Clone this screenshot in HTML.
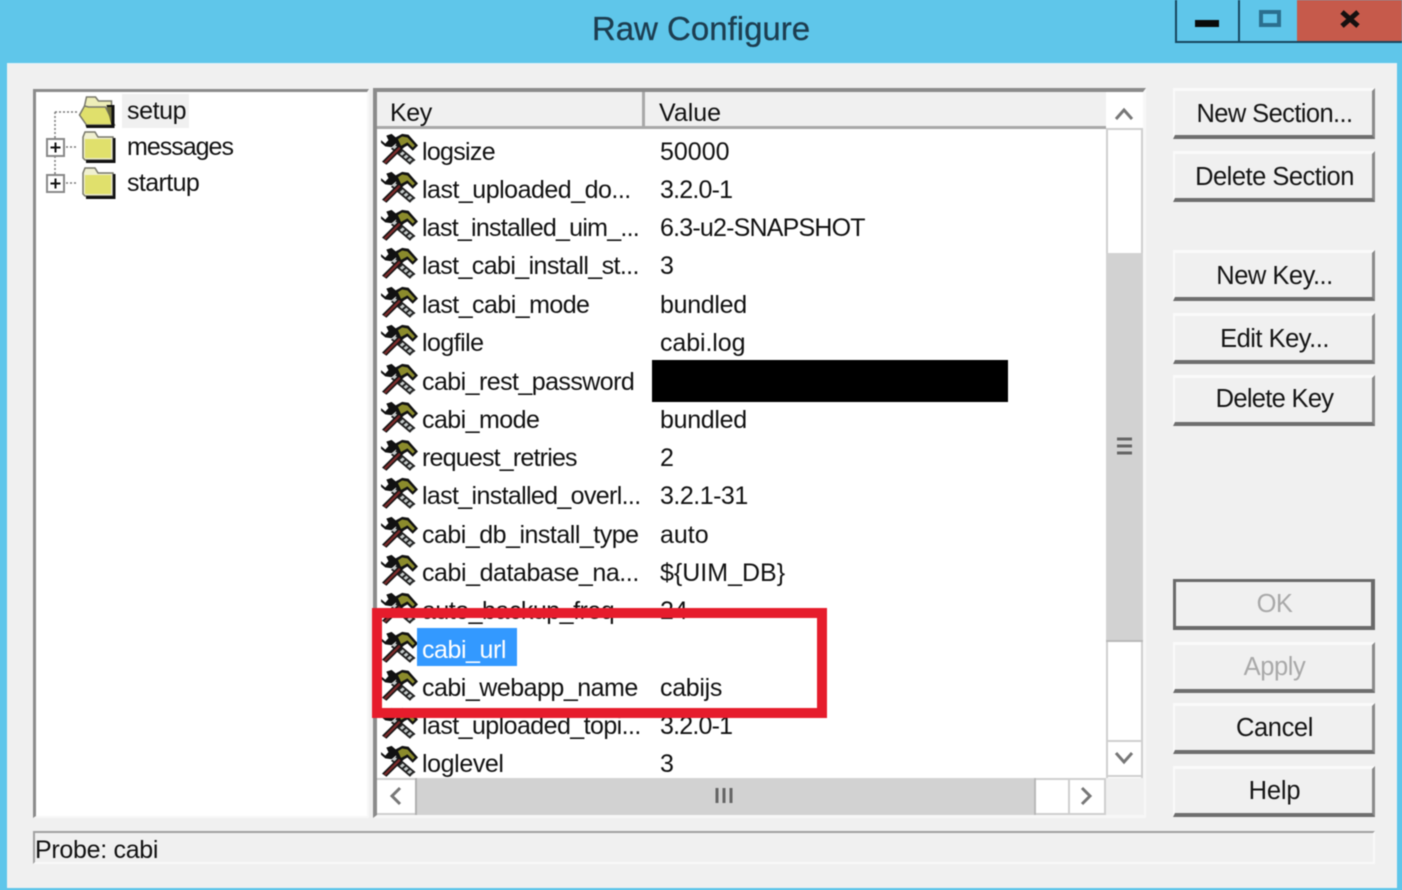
<!DOCTYPE html>
<html><head><meta charset="utf-8"><title>Raw Configure</title>
<style>
html,body{margin:0;padding:0;width:1402px;height:890px;overflow:hidden;background:#5fc6ea}
#w{position:absolute;left:0;top:0;width:1402px;height:890px;overflow:hidden;filter:blur(.55px);font-family:"Liberation Sans",sans-serif;color:#111}
#w div{position:absolute;box-sizing:border-box}
.t{font-size:25px;line-height:38px;height:38px;white-space:nowrap}
#rows .t{margin-top:1px}
.b{left:1173px;width:202px;height:51px;padding-left:2px;background:#f0f0f0;border-top:3px solid #fafafa;border-left:2px solid #fafafa;border-right:3px solid #8a8a8a;border-bottom:4px solid #6e6e6e;text-align:center;font-size:25.5px;line-height:44px;color:#151515;white-space:nowrap}
.d{color:#a9a9a9}
svg{position:absolute;overflow:visible}
#rows svg{left:3px;width:38px;height:32px;margin-top:1px}
</style></head><body>
<div id="w">
<svg width="0" height="0" style="left:0;top:0"><defs>
<symbol id="h" viewBox="0 0 36 36" preserveAspectRatio="none">
<path d="M13 15 L31 33" stroke="#222" stroke-width="7.500" fill="none"/>
<path d="M13 15 L31 33" stroke="#c4caca" stroke-width="3.800" stroke-dasharray="3 2" fill="none"/>
<path d="M1 8 L5 12 L8 8 L6 3 L11 1 L15 5 L15 12 L11 16 L5 15 L1 11Z" fill="#111"/>
<path d="M4 34 L21 14" stroke="#111" stroke-width="5.500" fill="none"/>
<path d="M4.500 33.500 L21 14" stroke="#7a2a2a" stroke-width="2.400" fill="none"/>
<path d="M13 6 L21 1 L27 2 L36 14 L31 20 L26 14 L20 18 L15 12Z" fill="#111"/>
<path d="M17 7 L21 4 L26 5 L33 14 L31 16.500 L26 10.500 L20 14.500Z" fill="#8b8b2c"/>
</symbol>
<symbol id="f" viewBox="0 0 36 36">
<path d="M3 8 L5 3 L15 3 L18 8 L33 8 L33 31 L5 31 L3 29Z" fill="#f0f0d0" stroke="#77776a" stroke-width="1.500"/>
<path d="M5 10 L31 10 L31 29 L5 29Z" fill="#e0e06c"/>
<path d="M33 9 L35.500 9 L35.500 34 L6 34 L6 31 L33 31Z" fill="#111"/>
</symbol>
<symbol id="o" viewBox="0 0 38 36">
<path d="M6 12 L8 3 L17 3 L20 7 L33 7 L33 13" fill="#eeeeb8" stroke="#77776a" stroke-width="1.500"/>
<path d="M10 13 L27 13 L36 31 L8 31 L1 21 L6 12Z" fill="#e0e06c" stroke="#77776a" stroke-width="1.500"/>
<path d="M28 11 L34 11 L36 11 L36 34 L8 34 L7 31 L33 31Z" fill="#111"/>
<path d="M28 13 L33 13 L33 29Z" fill="#6d6d3c"/>
</symbol>
</defs></svg>

<!-- title bar -->
<div style="left:0;top:9px;width:1402px;text-align:center;font-size:33px;line-height:40px;color:#1d3d50;-webkit-text-stroke:.3px #1d3d50">Raw Configure</div>
<div style="left:1175px;top:0;width:124px;height:43px;border:2px solid #17465f;border-top:none"></div>
<div style="left:1238px;top:0;width:2px;height:42px;background:#17465f"></div>
<div style="left:1297px;top:0;width:105px;height:43px;background:#c65a4b;border-bottom:2px solid #17465f"></div>
<div style="left:1195px;top:20px;width:24px;height:7px;background:#0a0a0a"></div>
<div style="left:1259px;top:10px;width:22px;height:17px;border:4px solid #2b6f8e"></div>
<svg style="left:1338px;top:9px" width="24" height="20"><path d="M4 3 L20 17 M20 3 L4 17" stroke="#151010" stroke-width="5"/></svg>

<!-- client -->
<div style="left:7px;top:63px;width:1390px;height:825px;background:#f0f0f0;border-top:1px solid #e4f2f8"></div>

<!-- tree panel -->
<div style="left:33px;top:89px;width:336px;height:729px;background:#fff;border-top:3px solid #8b8b8b;border-left:3px solid #8b8b8b;border-right:2px solid #f7f7f7;border-bottom:2px solid #f7f7f7"></div>
<div style="left:122px;top:94px;width:67px;height:34px;background:#f0f0f0"></div>
<svg style="left:40px;top:100px" width="50" height="100"><path d="M15 12 H38 M15 12 V38 M15 56 V74 M26 47 H38 M26 83 H38" stroke="#777" stroke-width="1.500" stroke-dasharray="2 2" fill="none"/></svg>
<svg style="left:78px;top:94px" width="39" height="36"><use href="#o"/></svg>
<svg style="left:80px;top:129px" width="36" height="36"><use href="#f"/></svg>
<svg style="left:80px;top:165px" width="36" height="36"><use href="#f"/></svg>
<svg style="left:46px;top:138px" width="20" height="20"><rect x="1" y="1" width="17" height="17" fill="#fff" stroke="#888" stroke-width="2"/><path d="M4.500 9.500 H14.500 M9.500 4.500 V14.500" stroke="#111" stroke-width="2"/></svg>
<svg style="left:46px;top:174px" width="20" height="20"><rect x="1" y="1" width="17" height="17" fill="#fff" stroke="#888" stroke-width="2"/><path d="M4.500 9.500 H14.500 M9.500 4.500 V14.500" stroke="#111" stroke-width="2"/></svg>
<div class="t" style="left:127px;top:92px;letter-spacing:-.4px">setup</div>
<div class="t" style="left:127px;top:128px;letter-spacing:-1px">messages</div>
<div class="t" style="left:127px;top:164px;letter-spacing:-.6px">startup</div>

<!-- list panel -->
<div style="left:373px;top:88px;width:773px;height:730px;background:#fff;border-top:4px solid #8b8b8b;border-left:4px solid #8b8b8b;border-right:3px solid #f7f7f7;border-bottom:3px solid #f7f7f7"></div>
<div style="left:377px;top:92px;width:729px;height:37px;background:#f0f0f0;border-bottom:3px solid #a8a8a8"></div>
<div style="left:377px;top:92px;width:268px;height:37px;border-right:3px solid #a8a8a8"></div>
<div class="t" style="left:390px;top:94px;letter-spacing:-.4px">Key</div>
<div class="t" style="left:659px;top:94px">Value</div>

<!-- rows -->
<div id="rows" style="left:377px;top:129px;width:729px;height:649px;overflow:hidden">
<svg style="top:3px"><use href="#h"/></svg><div class="t" style="left:45px;top:3px;letter-spacing:-.7px">logsize</div><div class="t" style="left:283px;top:3px">50000</div>
<svg style="top:41px"><use href="#h"/></svg><div class="t" style="left:45px;top:41px;letter-spacing:-.5px">last_uploaded_do...</div><div class="t" style="left:283px;top:41px;letter-spacing:-.8px">3.2.0-1</div>
<svg style="top:79px"><use href="#h"/></svg><div class="t" style="left:45px;top:79px;letter-spacing:-.75px">last_installed_uim_...</div><div class="t" style="left:283px;top:79px;letter-spacing:-.8px">6.3-u2-SNAPSHOT</div>
<svg style="top:117px"><use href="#h"/></svg><div class="t" style="left:45px;top:117px;letter-spacing:-.6px">last_cabi_install_st...</div><div class="t" style="left:283px;top:117px">3</div>
<svg style="top:156px"><use href="#h"/></svg><div class="t" style="left:45px;top:156px;letter-spacing:-.55px">last_cabi_mode</div><div class="t" style="left:283px;top:156px;letter-spacing:-.3px">bundled</div>
<svg style="top:194px"><use href="#h"/></svg><div class="t" style="left:45px;top:194px;letter-spacing:-.55px">logfile</div><div class="t" style="left:283px;top:194px;letter-spacing:-.1px">cabi.log</div>
<svg style="top:233px"><use href="#h"/></svg><div class="t" style="left:45px;top:233px;letter-spacing:-.56px">cabi_rest_password</div>
<svg style="top:271px"><use href="#h"/></svg><div class="t" style="left:45px;top:271px;letter-spacing:-.55px">cabi_mode</div><div class="t" style="left:283px;top:271px;letter-spacing:-.3px">bundled</div>
<svg style="top:309px"><use href="#h"/></svg><div class="t" style="left:45px;top:309px;letter-spacing:-.8px">request_retries</div><div class="t" style="left:283px;top:309px">2</div>
<svg style="top:347px"><use href="#h"/></svg><div class="t" style="left:45px;top:347px;letter-spacing:-.65px">last_installed_overl...</div><div class="t" style="left:283px;top:347px;letter-spacing:-.5px">3.2.1-31</div>
<svg style="top:386px"><use href="#h"/></svg><div class="t" style="left:45px;top:386px;letter-spacing:-.5px">cabi_db_install_type</div><div class="t" style="left:283px;top:386px">auto</div>
<svg style="top:424px"><use href="#h"/></svg><div class="t" style="left:45px;top:424px;letter-spacing:-.44px">cabi_database_na...</div><div class="t" style="left:283px;top:424px">${UIM_DB}</div>
<svg style="top:462px"><use href="#h"/></svg><div class="t" style="left:45px;top:462px;letter-spacing:-.5px">auto_backup_freq</div><div class="t" style="left:283px;top:462px">24</div>
<svg style="top:501px"><use href="#h"/></svg>
<div style="left:40px;top:499px;width:100px;height:38px;background:#3399ff"></div><div class="t" style="left:45px;top:501px;color:#fff;letter-spacing:-.45px">cabi_url</div>
<svg style="top:539px"><use href="#h"/></svg><div class="t" style="left:45px;top:539px;letter-spacing:-.5px">cabi_webapp_name</div><div class="t" style="left:283px;top:539px;letter-spacing:-.3px">cabijs</div>
<svg style="top:577px"><use href="#h"/></svg><div class="t" style="left:45px;top:577px;letter-spacing:-.57px">last_uploaded_topi...</div><div class="t" style="left:283px;top:577px;letter-spacing:-.8px">3.2.0-1</div>
<svg style="top:615px"><use href="#h"/></svg><div class="t" style="left:45px;top:615px;letter-spacing:-.4px">loglevel</div><div class="t" style="left:283px;top:615px">3</div>
</div>

<div style="left:652px;top:360px;width:356px;height:42px;background:#000"></div>
<div style="left:372px;top:608px;width:455px;height:110px;border:10.500px solid #e61c2c"></div>

<!-- vertical scrollbar -->
<div style="left:1106px;top:92px;width:37px;height:686px;background:#fff;border-left:2px solid #cfcfcf;border-right:2px solid #cfcfcf"></div>
<div style="left:1106px;top:92px;width:37px;height:38px;background:#fff;border-bottom:2px solid #cfcfcf"></div>
<div style="left:1106px;top:253px;width:37px;height:389px;background:#d2d2d2;border-bottom:2px solid #b9b9b9"></div>
<div style="left:1106px;top:740px;width:37px;height:37px;background:#fff;border:2px solid #cfcfcf"></div>
<svg style="left:1114px;top:106px" width="20" height="16"><path d="M2 13 L10 4 L18 13" stroke="#777" stroke-width="3" fill="none"/></svg>
<svg style="left:1114px;top:750px" width="20" height="16"><path d="M2 3 L10 12 L18 3" stroke="#777" stroke-width="3" fill="none"/></svg>
<svg style="left:1116px;top:437px" width="18" height="20"><path d="M1 2 H16 M1 9 H16 M1 16 H16" stroke="#666" stroke-width="3"/></svg>

<!-- horizontal scrollbar -->
<div style="left:377px;top:778px;width:729px;height:37px;background:#fff;border-top:2px solid #cfcfcf;border-bottom:2px solid #cfcfcf"></div>
<div style="left:415px;top:778px;width:621px;height:37px;background:#d2d2d2;border-left:2px solid #b0b0b0;border-right:2px solid #b9b9b9"></div>
<div style="left:1068px;top:778px;width:38px;height:37px;background:#fff;border:2px solid #cfcfcf"></div>
<div style="left:1106px;top:778px;width:38px;height:37px;background:#f0f0f0"></div>
<svg style="left:388px;top:786px" width="16" height="20"><path d="M12 2 L4 10 L12 18" stroke="#777" stroke-width="3" fill="none"/></svg>
<svg style="left:1078px;top:786px" width="16" height="20"><path d="M4 2 L12 10 L4 18" stroke="#777" stroke-width="3" fill="none"/></svg>
<svg style="left:715px;top:788px" width="20" height="16"><path d="M2 0 V15 M9 0 V15 M16 0 V15" stroke="#666" stroke-width="3"/></svg>

<!-- buttons -->
<div class="b" style="top:88px;line-height:46px;letter-spacing:-.6px">New Section...</div>
<div class="b" style="top:151px;line-height:46px;letter-spacing:-.5px">Delete Section</div>
<div class="b" style="top:250px;line-height:46px;letter-spacing:-.5px">New Key...</div>
<div class="b" style="top:313px;line-height:46px;letter-spacing:-.5px">Edit Key...</div>
<div class="b" style="top:375px;line-height:42px;letter-spacing:-.7px">Delete Key</div>
<div class="b d" style="top:579px;border:3px solid #6a6a6a;border-bottom-width:4px;border-right-width:4px;line-height:45px;letter-spacing:-.5px">OK</div>
<div class="b d" style="top:642px;letter-spacing:-.4px">Apply</div>
<div class="b" style="top:703px;letter-spacing:-.4px">Cancel</div>
<div class="b" style="top:766px;letter-spacing:-.2px">Help</div>

<!-- status -->
<div style="left:33px;top:831px;width:1342px;height:33px;border-top:2px solid #a0a0a0;border-left:2px solid #a0a0a0;border-right:2px solid #f9f9f9;border-bottom:2px solid #f9f9f9"></div>
<div class="t" style="left:35px;top:831px;letter-spacing:-.3px">Probe: cabi</div>
</div>
</body></html>
